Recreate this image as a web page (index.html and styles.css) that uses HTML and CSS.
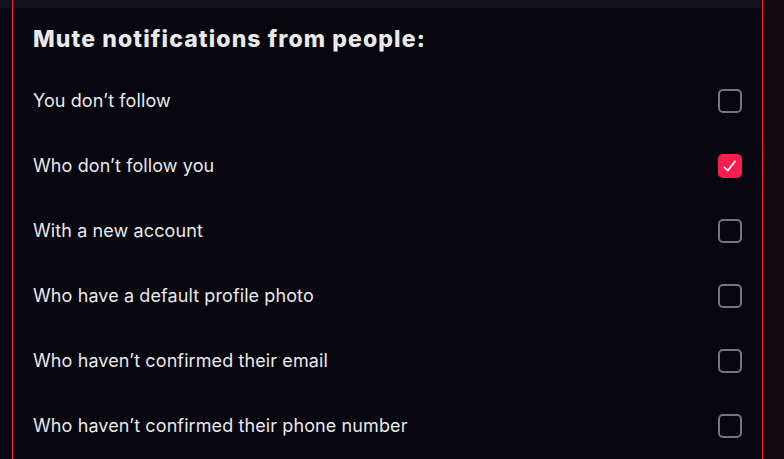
FILE: index.html
```html
<!DOCTYPE html>
<html lang="en">
<head>
<meta charset="utf-8">
<link rel="stylesheet" href="styles.css">
<title>Mute notifications</title>
</head>
<body>
<div class="page">
  <main class="panel">
    <div class="topbar"></div>
    <section class="content">
      <h2 class="heading">Mute notifications from people:</h2>
      <ul class="options">
        <li class="option"><span class="label">You don’t follow</span><span class="box"></span></li>
        <li class="option"><span class="label">Who don’t follow you</span><span class="box checked"><svg viewBox="0 0 24 24" class="tick"><path d="M9.64 18.952l-5.55-4.861 1.317-1.504 3.951 3.459 8.459-10.948L19.4 6.32 9.64 18.952z"/></svg></span></li>
        <li class="option"><span class="label">With a new account</span><span class="box"></span></li>
        <li class="option"><span class="label">Who have a default profile photo</span><span class="box"></span></li>
        <li class="option"><span class="label">Who haven’t confirmed their email</span><span class="box"></span></li>
        <li class="option"><span class="label">Who haven’t confirmed their phone number</span><span class="box"></span></li>
      </ul>
    </section>
  </main>
  <aside class="side"></aside>
</div>
</body>
</html>
```
FILE: styles.css
```css
html, body {
  margin: 0;
  padding: 0;
  height: 100%;
  background: #07050e;
  font-family: "Inter", "Noto Sans", sans-serif;
  color: #e7e9ea;
  overflow: hidden;
}
.page {
  display: flex;
  height: 459px;
}
.panel {
  width: 763px;
  flex: none;
  display: flex;
  flex-direction: column;
}
.topbar {
  height: 8px;
  background: #13111b;
  flex: none;
}
.content {
  margin-left: 12px;
  border-left: 1px solid #f4213f;
  border-right: 1px solid #f4213f;
  margin-top: -8px;
  padding: 8px 20px 0 20px;
  flex: 1;
}
.heading {
  margin: 16px 0 0 0;
  font-size: 23px;
  font-weight: 800;
  line-height: 30px;
  letter-spacing: 1.1px;
}
.options {
  list-style: none;
  margin: 14px 0 0 0;
  padding: 0;
}
.option {
  display: flex;
  align-items: center;
  justify-content: space-between;
  height: 65px;
}
.label {
  font-size: 18px;
  line-height: 22px;
  letter-spacing: 0.1px;
}
.box {
  width: 20px;
  height: 20px;
  border: 2px solid #76757b;
  border-radius: 5px;
  display: flex;
  align-items: center;
  justify-content: center;
}
.box.checked {
  background: #f91d50;
  border-color: #f91d50;
}
.tick {
  width: 20px;
  height: 20px;
  fill: #ffffff;
}
.side {
  flex: 1;
  background: #150a10;
}
```
